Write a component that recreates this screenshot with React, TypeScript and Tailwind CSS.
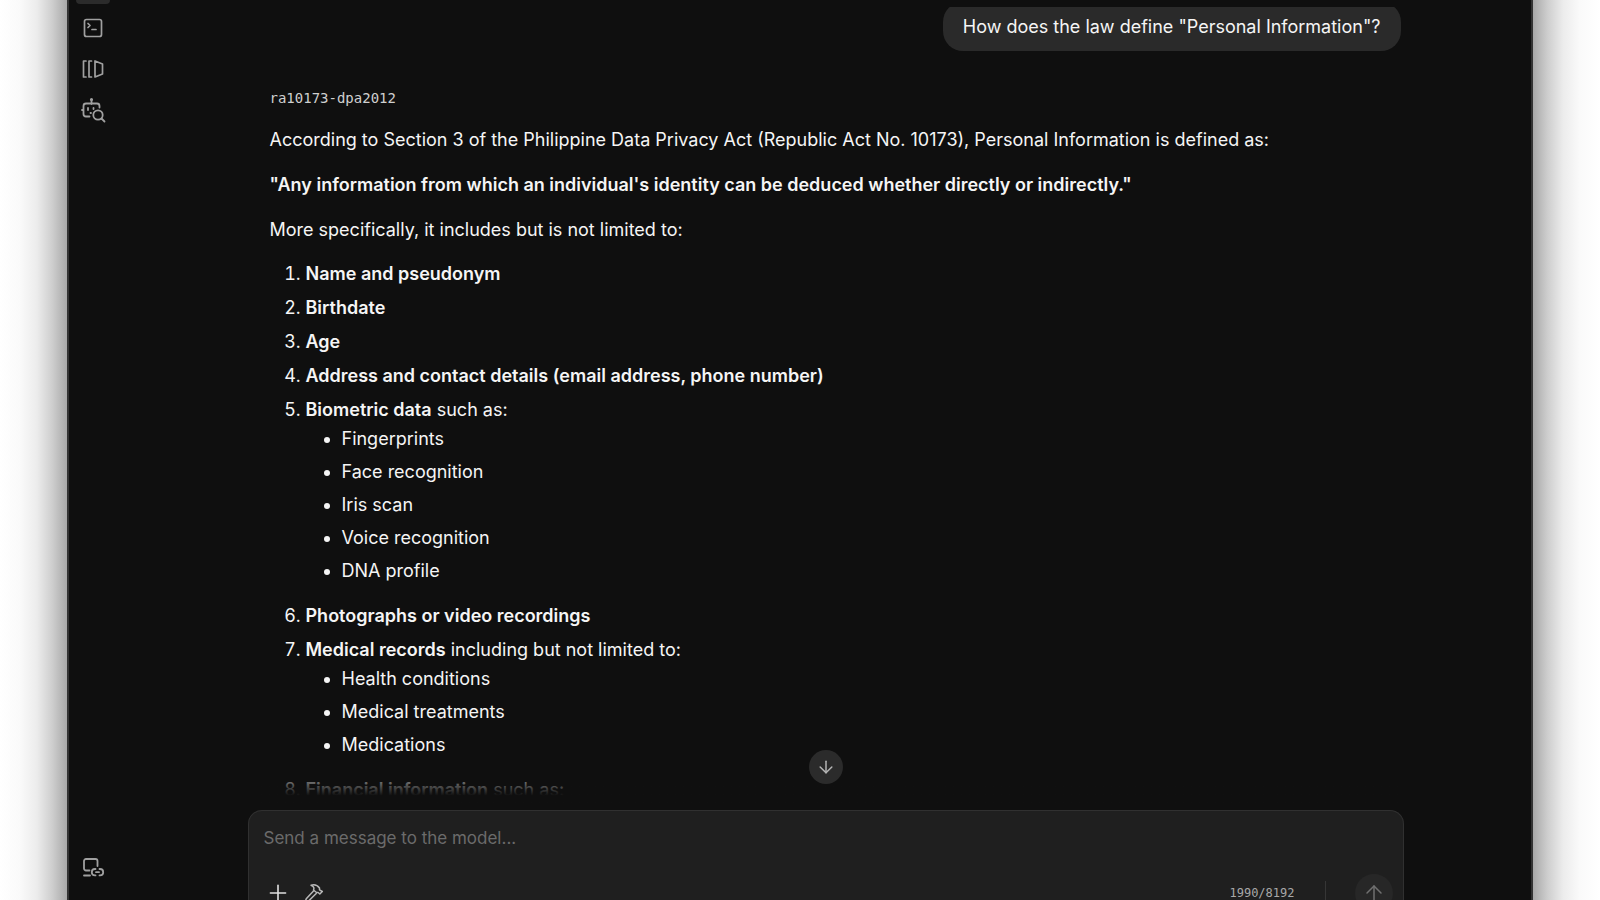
import React from 'react';
import { ArrowDown, ArrowUp, Plus } from 'lucide-react';

interface Entry {
  bold: string;
  rest?: string;
  children?: string[];
}

const entries: Entry[] = [
  { bold: 'Name and pseudonym' },
  { bold: 'Birthdate' },
  { bold: 'Age' },
  { bold: 'Address and contact details (email address, phone number)' },
  {
    bold: 'Biometric data',
    rest: 'such as:',
    children: ['Fingerprints', 'Face recognition', 'Iris scan', 'Voice recognition', 'DNA profile'],
  },
  { bold: 'Photographs or video recordings' },
  {
    bold: 'Medical records',
    rest: 'including but not limited to:',
    children: ['Health conditions', 'Medical treatments', 'Medications'],
  },
  { bold: 'Financial information', rest: 'such as:' },
];

const iconProps = {
  fill: 'none',
  stroke: 'currentColor',
  strokeLinecap: 'round' as const,
  strokeLinejoin: 'round' as const,
  'aria-hidden': true,
};

function TerminalIcon() {
  return (
    <svg width="24" height="24" viewBox="0 0 24 24" strokeWidth="1.7" {...iconProps}>
      <rect x="3.5" y="3.5" width="17" height="17" rx="2" />
      <path d="M7 7.5l2 2-2 2M11 13.5h4" />
    </svg>
  );
}

function ModelsIcon() {
  return (
    <svg width="24" height="24" viewBox="0 0 24 24" strokeWidth="1.7" {...iconProps}>
      <path d="M5 4H2.500v16H5M10.500 4H8v16h2.500M14 4v16l7.500-3V7z" />
    </svg>
  );
}

function BotSearchIcon() {
  return (
    <svg width="26" height="26" viewBox="0 0 26 26" strokeWidth="1.8" {...iconProps}>
      <path d="M11.500 3v4M19.500 10.500V9a2.500 2.500 0 0 0-2.500-2.500H6A2.500 2.500 0 0 0 3.500 9v8A2.500 2.500 0 0 0 6 19.500h3.500M2 13h1.500M8 11v2M13.500 11v1M10.500 16h.5" />
      <circle cx="11.500" cy="2.500" r=".7" />
      <circle cx="18" cy="18" r="4.700" />
      <path d="M21.500 21.500l3 3" />
    </svg>
  );
}

function DeviceLinkIcon() {
  return (
    <svg width="24" height="24" viewBox="0 0 24 24" strokeWidth="1.8" {...iconProps}>
      <path d="M8.500 14.500H5a2 2 0 0 1-2-2V5a2 2 0 0 1 2-2h9.500a2 2 0 0 1 2 2v5M3 19.500h6" />
      <path d="M14.500 13h-.5a3.200 3.200 0 0 0 0 6.400h.5M18.500 13h.5a3.200 3.200 0 0 1 0 6.400h-.5M15 16.200h3" />
    </svg>
  );
}

function HammerIcon() {
  return (
    <svg width="20" height="20" viewBox="0 0 20 20" strokeWidth="1.5" {...iconProps}>
      <path d="M9.500 8l-7 7.500a1.600 1.600 0 0 0 2.300 2.300L12.200 10.500" />
      <path d="M7 2.200c3.500-1 6.500 0 8.500 2.800v1.800l2.800 1.700-2.500 2.500-1.600-1.500h-1.700L9.500 7c1-2.200 0-3.800-2.500-4.800z" />
    </svg>
  );
}

function Sidebar() {
  return (
    <nav aria-label="Main" className="flex w-12 shrink-0 flex-col items-center text-[#a0a0a0]">
      <button aria-label="Chat" className="h-1 w-[34px] rounded-b-md bg-[#2b2b2b]" />
      <button aria-label="Developer" className="mt-3 flex h-6 w-6 items-center justify-center">
        <TerminalIcon />
      </button>
      <button aria-label="My models" className="mt-[17px] flex h-6 w-6 items-center justify-center">
        <ModelsIcon />
      </button>
      <button aria-label="Discover" className="mt-4 flex h-[26px] w-[26px] items-center justify-center">
        <BotSearchIcon />
      </button>
      <button aria-label="Device link" className="mt-auto mb-5 flex h-6 w-6 items-center justify-center">
        <DeviceLinkIcon />
      </button>
    </nav>
  );
}

function Answer() {
  return (
    <article className="mt-[35px] pl-[22px] text-[18px] leading-[29px]">
      <h2 className="font-['DejaVu_Sans_Mono',monospace] text-[14px] leading-6 text-[#cfcfcf]">ra10173-dpa2012</h2>
      <p className="mt-[15px]">
        According to Section 3 of the Philippine Data Privacy Act (Republic Act No. 10173), Personal Information is
        defined as:
      </p>
      <p className="mt-4 font-semibold">
        "Any information from which an individual's identity can be deduced whether directly or indirectly."
      </p>
      <p className="mt-4">More specifically, it includes but is not limited to:</p>
      <ol className="mt-[15px] list-decimal space-y-[5px] pl-9">
        {entries.map((entry) => (
          <li key={entry.bold}>
            <strong className="font-semibold">{entry.bold}</strong>
            {entry.rest && ` ${entry.rest}`}
            {entry.children && (
              <ul className="mb-4 list-disc space-y-1 pl-9">
                {entry.children.map((child) => (
                  <li key={child}>{child}</li>
                ))}
              </ul>
            )}
          </li>
        ))}
      </ol>
    </article>
  );
}

function Composer() {
  return (
    <form className="rounded-t-[14px] border border-b-0 border-[#303030] bg-[#1f1f1f] pt-[13px] pr-[10px] pl-[15px]">
      <textarea
        aria-label="Message"
        rows={1}
        placeholder="Send a message to the model..."
        className="block h-[49px] w-full resize-none bg-transparent text-[17px] leading-7 outline-none placeholder:text-[#6b6b6b]"
      />
      <div className="flex h-10 items-center">
        <button type="button" aria-label="Attach" className="ml-px text-[#e0e0e0]">
          <Plus size={26} strokeWidth={1.5} />
        </button>
        <button type="button" aria-label="Tools" className="ml-[13px] text-[#b8b8b8]">
          <HammerIcon />
        </button>
        <span className="ml-auto font-['DejaVu_Sans_Mono',monospace] text-[12px] text-[#a8a8a8]">1990/8192</span>
        <span className="ml-[30px] h-6 w-px bg-[#363636]" />
        <button
          type="button"
          aria-label="Send"
          className="ml-[29px] flex h-[38px] w-[38px] items-center justify-center rounded-full bg-[#272727] text-[#707070]"
        >
          <ArrowUp size={24} strokeWidth={1.5} />
        </button>
      </div>
    </form>
  );
}

export default function App() {
  return (
    <div className="flex h-screen overflow-hidden bg-white font-[Inter,sans-serif]">
      {/* Soft window shadow */}
      <div className="w-[67px] shrink-0 bg-[linear-gradient(to_left,#a8a8a8,#cecece_22%,#ececec_45%,#fafafa_70%,#ffffff)]" />

      <div className="flex min-w-0 flex-1 border-x-2 border-[#333333] bg-[#0f0f0f] text-[#f5f5f5]">
        <Sidebar />

        <main className="flex min-w-0 flex-1 flex-col items-center pl-[3px]">
          <div className="relative mt-[7px] min-h-0 w-full max-w-[1156px] flex-1 overflow-hidden">
            <div className="pr-[3px]">
              <div className="-mt-[5px] flex justify-end">
                <p className="rounded-[20px] bg-[#2a2a2a] px-5 py-[10px] text-[18px] leading-[29px]">
                  How does the law define "Personal Information"?
                </p>
              </div>
              <Answer />
            </div>
            {/* Fade above the composer */}
            <div className="pointer-events-none absolute inset-x-0 bottom-0 h-12 bg-linear-to-t from-[#0f0f0f] from-30% to-transparent" />
            <button
              aria-label="Scroll to bottom"
              className="absolute bottom-[26px] left-1/2 flex h-[34px] w-[34px] -translate-x-1/2 items-center justify-center rounded-full bg-[#2b2b2b] text-[#b5b5b5]"
            >
              <ArrowDown size={20} strokeWidth={1.8} />
            </button>
          </div>
          <div className="h-[90px] w-full max-w-[1156px] shrink-0">
            <Composer />
          </div>
        </main>
      </div>

      <div className="w-[67px] shrink-0 bg-[linear-gradient(to_right,#a8a8a8,#cecece_22%,#ececec_45%,#fafafa_70%,#ffffff)]" />
    </div>
  );
}
